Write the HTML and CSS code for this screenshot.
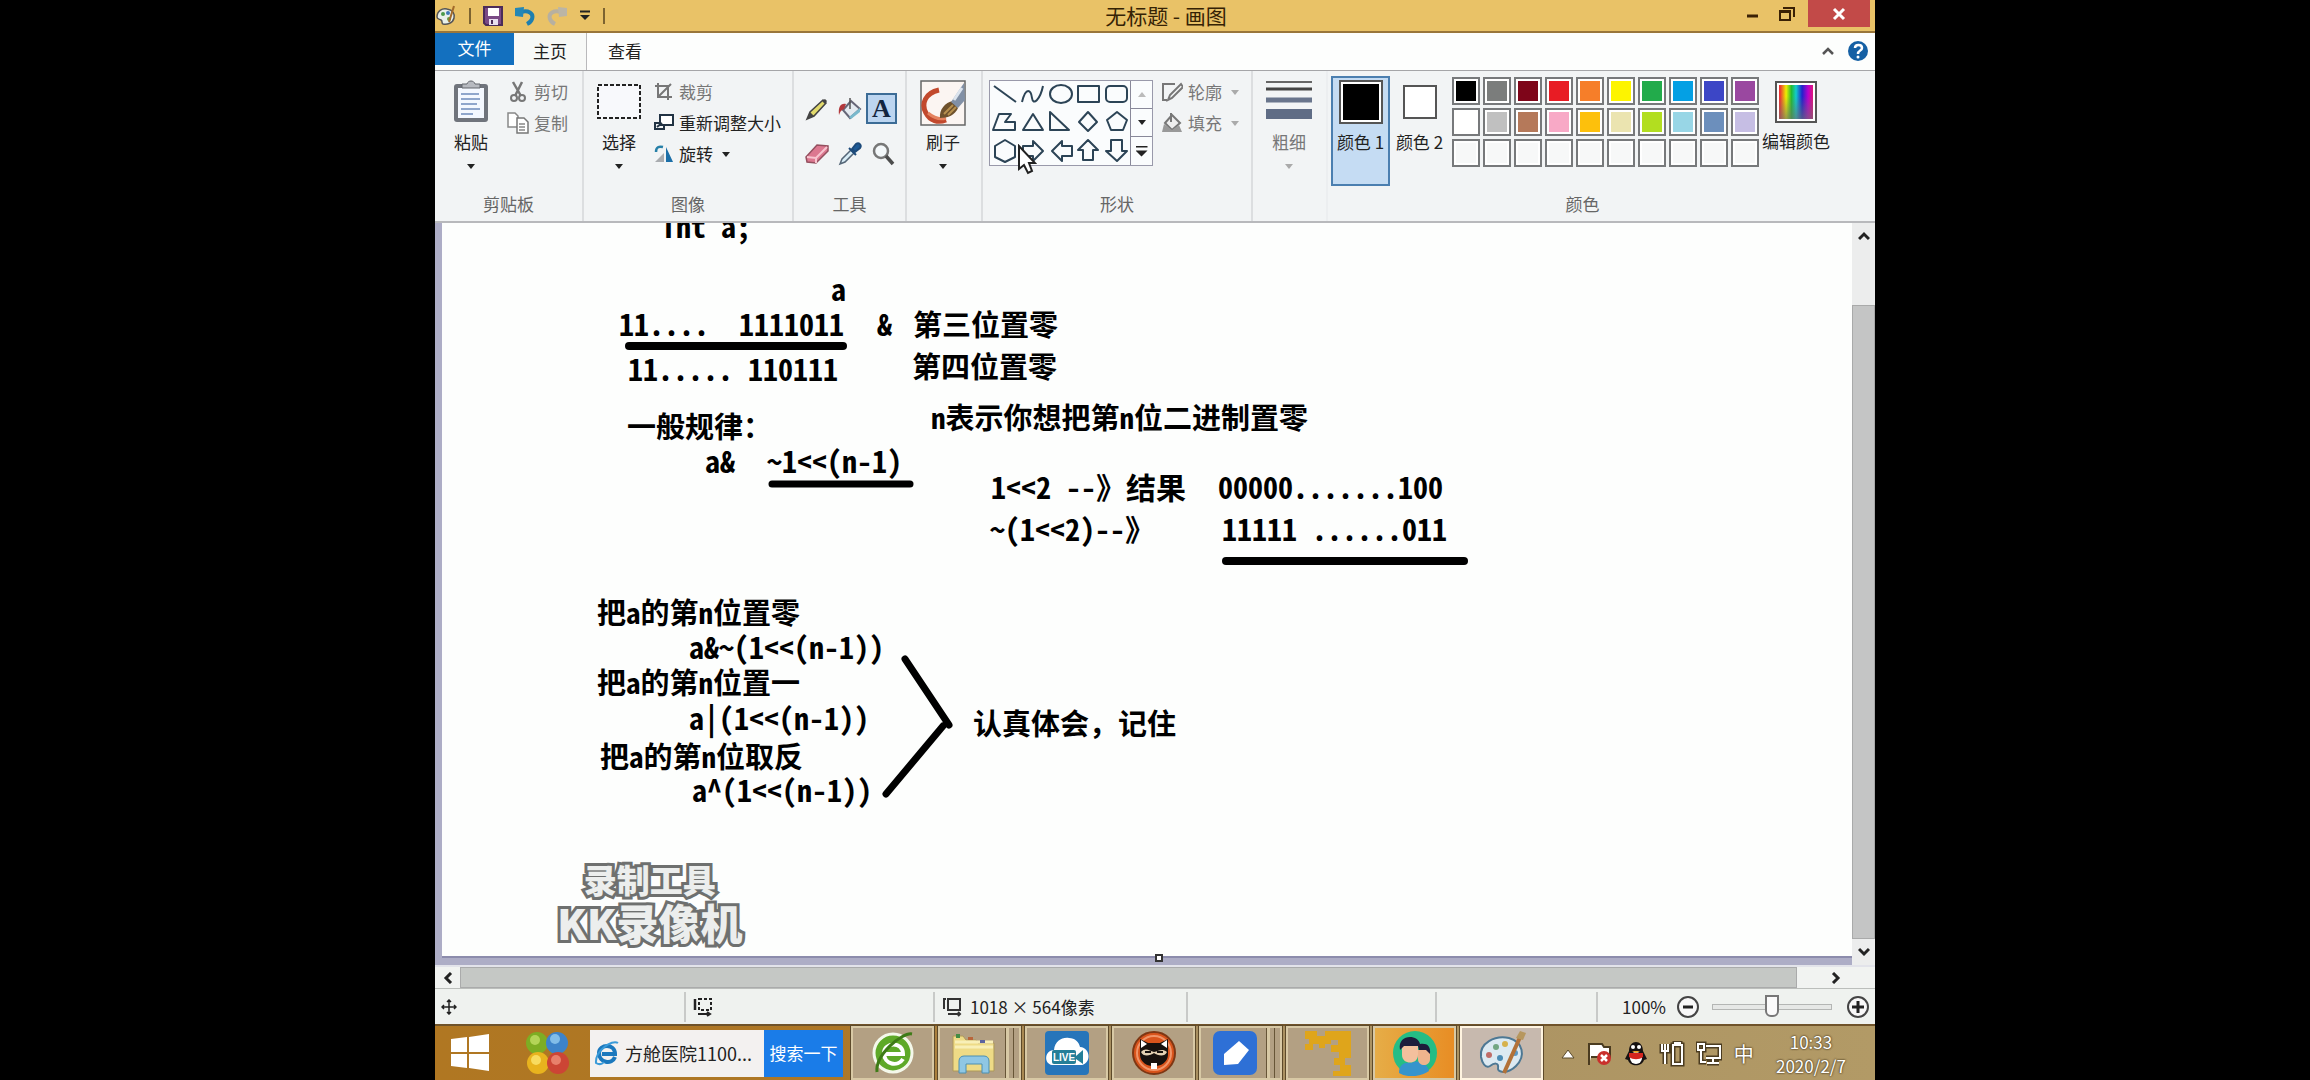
FILE: index.html
```html
<!DOCTYPE html>
<html lang="zh-CN">
<head>
<meta charset="utf-8">
<title>无标题 - 画图</title>
<link rel="stylesheet" href="styles.css">
</head>
<body>
<div class="screen">
  <header class="titlebar">
    <div class="quick">
      <svg class="q-logo" width="22" height="22" viewBox="0 0 22 22"><path d="M2 12C2 6 7 3 12 4c6 1 8 5 7 9-1 5-7 7-11 6-2-1 0-3-2-4s-4-1-4-3z" fill="#e8f0ea" stroke="#555" stroke-width="1.500"/><circle cx="8" cy="9" r="2" fill="#4a9a4a"/><circle cx="13" cy="8" r="2" fill="#3e79b8"/><circle cx="14" cy="14" r="2" fill="#6a9a40"/><path d="M19 1l-5 16" stroke="#a26a2a" stroke-width="2"/></svg>
      <span class="bar"></span>
      <button aria-label="保存"><svg width="20" height="20" viewBox="0 0 20 20"><path d="M1 1h18v18H3l-2-2z" fill="#7a4a86" stroke="#4b2c59" stroke-width="2"/><path d="M5 2h11v8H5z" fill="#fff"/><path d="M6 13h9v6H6z" fill="#e9dff0"/><path d="M8 14h2v4H8z" fill="#4b2c59"/></svg></button>
      <button aria-label="撤消"><svg width="20" height="20" viewBox="0 0 20 20"><path d="M6 6c7-2 13 1 11 7-1 3-3 4-5 5" fill="none" stroke="#1e7fb0" stroke-width="4"/><path d="M0 2l9-1-1 10-8-1z" fill="#2487b5"/></svg></button>
      <button aria-label="重做"><svg width="20" height="20" viewBox="0 0 20 20"><path d="M14 6C7 4 1 7 3 13c1 3 3 4 5 5" fill="none" stroke="#b7b0a0" stroke-width="4"/><path d="M20 2l-9-1 1 10 8-1z" fill="#bbb5a6"/></svg></button>
      <button aria-label="自定义"><svg width="12" height="12" viewBox="0 0 12 12"><path d="M1 1.500h10" stroke="#222" stroke-width="2"/><path d="M1 5h10l-5 5z" fill="#222"/></svg></button>
      <span class="bar"></span>
    </div>
    <h1>无标题 - 画图</h1>
    <div class="winbtns">
      <button aria-label="最小化"><svg width="14" height="14" viewBox="0 0 14 14"><path d="M1 9h11" stroke="#3a2105" stroke-width="3"/></svg></button>
      <button aria-label="还原"><svg width="16" height="16" viewBox="0 0 16 16"><path d="M1 5h10v9H1zM1 6h10M4 2h11v9" fill="none" stroke="#3a2105" stroke-width="2"/></svg></button>
      <button class="close" aria-label="关闭"><svg width="14" height="14" viewBox="0 0 14 14"><path d="M2 2l10 10M12 2L2 12" stroke="#fff" stroke-width="3"/></svg></button>
    </div>
  </header>

  <nav class="tabs">
    <button class="tab file">文件</button>
    <button class="tab home">主页</button>
    <button class="tab view">查看</button>
    <button class="icon fold" aria-label="折叠功能区"><svg width="14" height="12" viewBox="0 0 14 12"><path d="M2 9l5-5 5 5" fill="none" stroke="#555" stroke-width="2.500"/></svg></button>
    <button class="icon" aria-label="帮助"><svg width="20" height="20" viewBox="0 0 20 20"><circle cx="10" cy="10" r="10" fill="#1560a4"/><path d="M7 7c0-4 7-4 7 0 0 3-4 2-4 6" fill="none" stroke="#fff" stroke-width="2.500"/><circle cx="10" cy="16" r="1.500" fill="#fff"/></svg></button>
  </nav>

  <section class="ribbon">
    <div class="group g-clip">
      <div class="tools">
        <button class="big"><svg class="pic" width="36" height="44" viewBox="0 0 36 44"><rect x="1" y="4" width="34" height="38" rx="3" fill="#70747c"/><rect x="5" y="8" width="26" height="30" fill="#f4f8ff"/><path d="M8 14h18M8 19h19M8 24h16M8 29h19M8 34h12" stroke="#8fa6cc" stroke-width="2"/><path d="M9 8V4h5c1-4 7-4 8 0h5v4z" fill="#b7bac0" stroke="#63666c"/></svg><span>粘贴</span><i class="down"></i></button>
        <div class="rows">
          <button class="row dim"><svg width="22" height="22" viewBox="0 0 22 22"><path d="M6 1l8 14M15 1L8 15" stroke="#777" stroke-width="2.500"/><circle cx="7" cy="17" r="3" fill="none" stroke="#777" stroke-width="2"/><circle cx="15" cy="17" r="3" fill="none" stroke="#777" stroke-width="2"/></svg>剪切</button>
          <button class="row dim"><svg width="22" height="22" viewBox="0 0 22 22"><path d="M1 1h7l3 3v11H1z" fill="#fff" stroke="#888" stroke-width="1.500"/><path d="M10 6h7l4 4v11H10z" fill="#fff" stroke="#777" stroke-width="1.500"/><path d="M12 12h6M12 15h6M12 18h6" stroke="#888" stroke-width="1.500"/></svg>复制</button>
        </div>
      </div>
      <h2>剪贴板</h2>
    </div>
    <div class="group g-image">
      <div class="tools">
        <button class="big"><svg class="pic" width="44" height="44" viewBox="0 0 44 44"><rect x="1" y="5" width="42" height="33" fill="#f8f9fc" stroke="#222" stroke-width="2" stroke-dasharray="4 2"/></svg><span>选择</span><i class="down"></i></button>
        <div class="rows">
          <button class="row dim"><svg width="20" height="20" viewBox="0 0 20 20"><path d="M4 1v14h14M1 4h13v14M5 14L17 2" fill="none" stroke="#777" stroke-width="2"/></svg>裁剪</button>
          <button class="row"><svg width="20" height="20" viewBox="0 0 20 20"><path d="M6 2h13v10H6z" fill="#fff" stroke="#234" stroke-width="2"/><path d="M5 10H1v6h9v-3M3 14l5-4" fill="none" stroke="#234" stroke-width="2"/></svg>重新调整大小</button>
          <button class="row"><svg width="20" height="20" viewBox="0 0 20 20"><path d="M1 18h9v-9z" fill="#a9acb0"/><path d="M12 18h7L12 3z" fill="#1c6fa8"/><path d="M2 8C2 3 5 2 9 3" fill="none" stroke="#2780a8" stroke-width="2.500"/></svg>旋转<i class="down"></i></button>
        </div>
      </div>
      <h2>图像</h2>
    </div>
    <div class="group g-tools">
      <div class="toolgrid">
        <button aria-label="铅笔"><svg width="24" height="24" viewBox="0 0 24 24"><path d="M2 22l3-7L18 3l3 3L9 19z" fill="#e2da6c" stroke="#444" stroke-width="1.500"/><path d="M2 22l3-7 4 4zM17 4l3-2 2 2-2 3z" fill="#444"/></svg></button>
        <button aria-label="填充"><svg width="26" height="24" viewBox="0 0 26 24"><path d="M14 4l9 8-10 9-7-8z" fill="#e4eaf0" stroke="#667" stroke-width="2"/><path d="M13 1v11" stroke="#555" stroke-width="1.500"/><path d="M9 7C4 6 1 9 2 18c1-3 2-5 5-6z" fill="#b2383c"/><path d="M12 20l11-9v4l-9 7z" fill="#79b8cc"/></svg></button>
        <button class="on" aria-label="文本">A</button>
        <button aria-label="橡皮擦"><svg width="24" height="22" viewBox="0 0 24 22"><path d="M1 14L12 2l11 1v5L11 20l-9-1z" fill="#dc7890" stroke="#94505f" stroke-width="1.500"/><path d="M2 14l9 1L22 4M11 15v5" fill="none" stroke="#f8c5d0" stroke-width="2"/></svg></button>
        <button aria-label="取色器"><svg width="24" height="24" viewBox="0 0 24 24"><path d="M2 22l2-5 9-9 3 3-9 9z" fill="#d9edf7" stroke="#567" stroke-width="1.500"/><path d="M11 6l7 7M14 7l4-5c3-2 6 1 4 4l-5 4z" fill="#1d5a96" stroke="#1d4a7a" stroke-width="2"/></svg></button>
        <button aria-label="放大镜"><svg width="24" height="24" viewBox="0 0 24 24"><circle cx="10" cy="9" r="7" fill="#f4f8fa" stroke="#777" stroke-width="2.500"/><path d="M15 14l7 8" stroke="#4c4c4c" stroke-width="3.500"/></svg></button>
      </div>
      <h2>工具</h2>
    </div>
    <div class="group g-brush">
      <div class="tools">
        <button class="big"><svg class="pic" width="46" height="46" viewBox="0 0 46 46"><rect x="1" y="1" width="44" height="44" fill="#fbf5f2" stroke="#666" stroke-width="1.500"/><path d="M19 10C5 13 1 24 6 33c4 8 12 10 20 7" fill="none" stroke="#c2492d" stroke-width="5"/><path d="M8 33c6 5 12 7 18 5" fill="none" stroke="#e4825f" stroke-width="3"/><path d="M20 38c-1-8 5-16 13-17l5 7c-3 7-10 10-18 10z" fill="#6e512c"/><path d="M24 34l9-9M28 35l8-8" stroke="#b7904e" stroke-width="2"/><path d="M31 22L44 3l1 17-7 8z" fill="#8190a6"/><path d="M34 20l8-12" stroke="#dce4ee" stroke-width="3"/></svg><span>刷子</span><i class="down"></i></button>
      </div>
    </div>
    <div class="group g-shapes">
      <div class="tools">
        <div class="gallery">
          <svg width="140" height="84" viewBox="0 0 140 84" role="img" aria-label="形状库"><g fill="none" stroke="#2c4456" stroke-width="2" stroke-linejoin="round"><path d="M4 5l22 16"/><path d="M32 21c4-16 9-12 10-4s8 2 11-12"/><ellipse cx="71" cy="13" rx="11" ry="9"/><path d="M88 5h21v16H88z"/><rect x="116" y="5" width="21" height="16" rx="4"/><path d="M3 49l6-16h12l-6 8h10v8z"/><path d="M43 33l10 16H33z"/><path d="M60 31v18h19z"/><path d="M98 31l9 10-9 9-9-9z"/><path d="M127 31l10 8-4 10h-12l-4-10z"/><path d="M15 59l10 6v11l-10 5-10-5V65z"/><path d="M33 65h10v-5l10 10-10 10v-5H33z"/><path d="M82 65H72v-5L62 70l10 10v-5h10z"/><path d="M93 79V69h-5l10-10 10 10h-5v10z"/><path d="M121 59v11h-5l11 10 10-10h-5V59z"/></g></svg>
          <div class="pager"><button class="off" aria-label="上一行"><i class="up"></i></button><button aria-label="下一行"><i class="down"></i></button><button aria-label="更多"><i class="more"></i></button></div>
        </div>
        <div class="rows">
          <button class="row dim"><svg width="22" height="22" viewBox="0 0 22 22"><path d="M14 3H2v16h4M7 19l2-5L20 3l2 3L11 17z" fill="none" stroke="#777" stroke-width="2"/></svg>轮廓<i class="down"></i></button>
          <button class="row dim"><svg width="22" height="22" viewBox="0 0 22 22"><path d="M11 3l8 8-8 7-7-7zM10 1v9" fill="#eee" stroke="#777" stroke-width="2"/><path d="M3 12l-2 8h20l-3-7-7 5z" fill="#999"/></svg>填充<i class="down"></i></button>
        </div>
      </div>
      <h2>形状</h2>
    </div>
    <div class="group g-size">
      <div class="tools">
        <button class="big dim"><svg class="pic" width="46" height="44" viewBox="0 0 46 44"><path d="M0 2h46" stroke="#666" stroke-width="2"/><path d="M0 9h46" stroke="#444" stroke-width="3"/><path d="M0 20h46" stroke="#69758c" stroke-width="5"/><path d="M0 34h46" stroke="#5f6c85" stroke-width="10"/></svg><span>粗细</span><i class="down"></i></button>
      </div>
    </div>
    <div class="group g-colors">
      <div class="tools">
        <button class="pick on"><b class="sw black"></b><span>颜色 1</span></button>
        <button class="pick"><b class="sw white"></b><span>颜色 2</span></button>
        <div class="palette">
          <button class="k1" aria-label="黑色"></button><button class="k2" aria-label="灰色"></button><button class="k3" aria-label="深红"></button><button class="k4" aria-label="红色"></button><button class="k5" aria-label="橙色"></button><button class="k6" aria-label="黄色"></button><button class="k7" aria-label="绿色"></button><button class="k8" aria-label="青绿"></button><button class="k9" aria-label="靛青"></button><button class="k10" aria-label="紫色"></button>
          <button class="k11" aria-label="白色"></button><button class="k12" aria-label="浅灰"></button><button class="k13" aria-label="褐色"></button><button class="k14" aria-label="玫瑰"></button><button class="k15" aria-label="金色"></button><button class="k16" aria-label="浅黄"></button><button class="k17" aria-label="酸橙"></button><button class="k18" aria-label="淡青"></button><button class="k19" aria-label="蓝灰"></button><button class="k20" aria-label="淡紫"></button>
          <button aria-label="空 1"></button><button aria-label="空 2"></button><button aria-label="空 3"></button><button aria-label="空 4"></button><button aria-label="空 5"></button><button aria-label="空 6"></button><button aria-label="空 7"></button><button aria-label="空 8"></button><button aria-label="空 9"></button><button aria-label="空 10"></button>
        </div>
        <button class="big edit"><b class="rainbow"></b><span>编辑颜色</span></button>
      </div>
      <h2>颜色</h2>
    </div>
    <svg class="cursor" width="20" height="32" viewBox="0 0 20 32"><path d="M2 2v23l5-4 4 8 4-2-3-8h6z" fill="#fff" stroke="#222" stroke-width="2"/></svg>
  </section>

  <main class="work">
    <div class="canvas">
      <svg class="ink" width="1410" height="735" viewBox="442 221 1410 735"><g stroke="#000" stroke-width="8" stroke-linecap="round" fill="none"><path d="M629 344h214"/><path d="M772 482h138" stroke-width="7"/><path d="M1226 559h238"/><path d="M905 657l44 66M943 724l-57 68" stroke-width="7"/></g></svg>
      <p class="t n1">int a;</p>
      <p class="t n2">a</p>
      <p class="t n3">11....  1111011</p>
      <p class="t n4">&amp;</p>
      <p class="t zh n5">第三位置零</p>
      <p class="t n6">11..... 110111</p>
      <p class="t zh n7">第四位置零</p>
      <p class="t zh n8">一般规律：</p>
      <p class="t n9">a&amp;</p>
      <p class="t n10">~1&lt;&lt;(n-1)</p>
      <p class="t zh n11">n表示你想把第n位二进制置零</p>
      <p class="t n12">1&lt;&lt;2 --》结果</p>
      <p class="t n13">00000.......100</p>
      <p class="t n14">~(1&lt;&lt;2)--》</p>
      <p class="t n15">11111 ......011</p>
      <p class="t zh n16">把a的第n位置零</p>
      <p class="t n17">a&amp;~(1&lt;&lt;(n-1))</p>
      <p class="t zh n18">把a的第n位置一</p>
      <p class="t n19">a|(1&lt;&lt;(n-1))</p>
      <p class="t zh n20">把a的第n位取反</p>
      <p class="t n21">a^(1&lt;&lt;(n-1))</p>
      <p class="t zh n22">认真体会，记住</p>
      <div class="mark"><p>录制工具</p><p class="kk">KK录像机</p></div>
    </div>
    <div class="vscroll"><button aria-label="向上滚动"><svg width="12" height="10" viewBox="0 0 12 10"><path d="M1 8l5-5 5 5" fill="none" stroke="#222" stroke-width="3"/></svg></button><div class="thumb"></div><button aria-label="向下滚动"><svg width="12" height="10" viewBox="0 0 12 10"><path d="M1 2l5 5 5-5" fill="none" stroke="#222" stroke-width="3"/></svg></button></div>
    <i class="handle"></i>
  </main>
  <div class="hscroll"><button aria-label="向左滚动"><svg width="10" height="12" viewBox="0 0 10 12"><path d="M8 1L3 6l5 5" fill="none" stroke="#222" stroke-width="3"/></svg></button><div class="thumb"></div><button class="r" aria-label="向右滚动"><svg width="10" height="12" viewBox="0 0 10 12"><path d="M2 1l5 5-5 5" fill="none" stroke="#222" stroke-width="3"/></svg></button></div>

  <footer class="status">
    <div class="s1"><svg width="16" height="16" viewBox="0 0 16 16"><path d="M8 1v14M1 8h14M6 3l2-2 2 2M6 13l2 2 2-2M3 6L1 8l2 2M13 6l2 2-2 2" fill="none" stroke="#222" stroke-width="1.500"/></svg></div>
    <div class="s2"><svg width="20" height="20" viewBox="0 0 20 20"><path d="M2 2v11" stroke="#222" stroke-width="2.500"/><path d="M6 2h12v11H6z" fill="none" stroke="#222" stroke-width="2" stroke-dasharray="3 2"/><path d="M5 17h12m-3-2l3 2-3 2" fill="none" stroke="#222" stroke-width="2"/></svg></div>
    <div class="s3"><svg width="20" height="20" viewBox="0 0 20 20"><path d="M1 2h3M2 2v10M6 2h12v11H6zM6 17h12m-2-2l2 2-2 2" fill="none" stroke="#333" stroke-width="2"/></svg><span>1018 × 564像素</span></div>
    <div class="s4"></div>
    <div class="s5"></div>
    <div class="zoom"><label for="zoom">100%</label>
      <button aria-label="缩小"><svg width="24" height="24" viewBox="0 0 24 24"><circle cx="12" cy="12" r="10" fill="#f8f8f8" stroke="#444" stroke-width="2"/><path d="M7 12h10" stroke="#222" stroke-width="3"/></svg></button>
      <input id="zoom" type="range" min="0" max="100" value="50">
      <button aria-label="放大"><svg width="24" height="24" viewBox="0 0 24 24"><circle cx="12" cy="12" r="10" fill="#f8f8f8" stroke="#444" stroke-width="2"/><path d="M6 12h12M12 6v12" stroke="#222" stroke-width="3"/></svg></button>
    </div>
  </footer>

  <nav class="taskbar">
    <button class="start" aria-label="开始"><svg width="40" height="38" viewBox="0 0 40 38"><path d="M1 5l16-2v15H1zM19 3l20-3v18H19zM1 20h16v14L1 32zM19 20h20v17l-20-3z" fill="#fff"/></svg></button>
    <button class="clover" aria-label="启动器"><svg width="44" height="44" viewBox="0 0 44 44"><circle cx="12" cy="12" r="11" fill="#7dad23"/><circle cx="32" cy="12" r="11" fill="#3d83c9"/><circle cx="13" cy="32" r="11" fill="#e8b31e"/><circle cx="33" cy="32" r="11" fill="#cc4535"/><circle cx="10" cy="9" r="5" fill="#b3d457"/><circle cx="30" cy="8" r="5" fill="#82bde8"/><circle cx="11" cy="29" r="5" fill="#f8dc60"/><circle cx="31" cy="29" r="5" fill="#e8806b"/></svg></button>
    <div class="search"><svg width="26" height="26" viewBox="0 0 26 26"><path d="M21 17c-3 8-16 6-16-4 0-9 16-10 16 1H8" fill="none" stroke="#1b78bd" stroke-width="4"/><path d="M24 3C18-1 1 11 2 23c5 3 8-1 8-1" fill="none" stroke="#3a9bd9" stroke-width="2"/></svg><input type="text" aria-label="搜索" value="方舱医院1100..."><button>搜索一下</button></div>
    <div class="apps">
      <button class="app a1" aria-label="浏览器"><svg width="44" height="44" viewBox="0 0 44 44"><circle cx="22" cy="22" r="19" fill="#5ea928" stroke="#f4f8ea" stroke-width="3"/><path d="M32 28c-5 8-19 6-19-6 0-11 19-12 19 1H14" fill="none" stroke="#fff" stroke-width="4"/><path d="M41 3C31 1 4 24 6 41" fill="none" stroke="#3e7b17" stroke-width="3"/></svg></button>
      <button class="app a2 stack" aria-label="文件资源管理器"><svg width="46" height="42" viewBox="0 0 46 42"><path d="M2 4h10l3 4h10l2 3h16v28H2z" fill="#eedb86" stroke="#ad985a"/><path d="M4 10h38M4 15h38" stroke="#f8efb7" stroke-width="3"/><path d="M5 2h4v4H5z" fill="#438c44"/><path d="M17 5h5v3h-5z" fill="#b9653a"/><path d="M29 8h5v3h-5z" fill="#5b63a0"/><path d="M8 41V29c0-3 2-5 5-5h20c3 0 5 2 5 5v12h-7v-9H15v9z" fill="#8fc7e4" stroke="#4d8fb0"/></svg></button>
      <button class="app a3" aria-label="LIVE"><svg width="46" height="46" viewBox="0 0 46 46"><rect x="1" y="1" width="44" height="44" rx="4" fill="#2675ba"/><path d="M8 35c-9-2-7-15 2-15 1-9 8-13 15-12 6 0 10 4 11 9 11 1 11 16 2 18z" fill="#fff"/><rect x="8" y="20" width="24" height="14" rx="2" fill="#247f98"/><path d="M32 26l7-6v14l-7-5z" fill="#247f98"/><text x="20" y="31" text-anchor="middle" class="live">LIVE</text></svg></button>
      <button class="app a4" aria-label="游戏"><svg width="46" height="46" viewBox="0 0 46 46"><circle cx="23" cy="23" r="21" fill="#d9541c" stroke="#7e3714" stroke-width="2"/><circle cx="23" cy="23" r="17" fill="none" stroke="#f09468" stroke-width="2"/><path d="M9 9l8 4h12l8-4v16c-1 15-27 15-28 0z" fill="#17110e"/><path d="M10 10l6 4-6 4zM36 10l-6 4 6 4z" fill="#fff"/><path d="M10 22c5-5 8-1 13 0 5-1 8-4 13 0-2 5-9 4-13 1-4 3-11 4-13-1z" fill="#e4d1b3"/><path d="M14 22h6M26 22h6" stroke="#17110e" stroke-width="2"/><path d="M20 33h6v6h-6z" fill="#fff"/></svg></button>
      <button class="app a5 stack" aria-label="笔记"><svg width="46" height="46" viewBox="0 0 46 46"><rect x="1" y="1" width="44" height="44" rx="7" fill="#2e70d6"/><path d="M12 24l15-13 10 9-11 14-14 1z" fill="#fff"/></svg></button>
      <button class="app a6" aria-label="应用"><svg width="50" height="46" viewBox="0 0 50 46"><path d="M2 1h12v5h8V1h26v27h-6v7h6v11H30v-5h7v-6h-6v-7h5v-6h-8v-7h7v-5h-7v4h-6v4h-6v-4h-6v6H2v-6h4V9H2z" fill="#dfa51b"/></svg></button>
      <button class="app a7" aria-label="课堂"><svg width="46" height="46" viewBox="0 0 46 46"><circle cx="23" cy="23" r="22" fill="#25bd85"/><path d="M7 43c0-9 6-11 12-10 8-4 16 0 18 8-8 6-22 7-30 2z" fill="#3694cc"/><path d="M10 15h16v10c0 10-16 10-16 0z" fill="#f4c09d"/><path d="M26 20h12v9c0 8-12 8-12 0z" fill="#efb48d"/><path d="M8 20C5 4 26 4 28 14c7-1 11 2 10 10l-4-4h-7l-1-4H12z" fill="#1d1d3c"/></svg></button>
      <button class="app a8" aria-label="画图"><svg width="48" height="46" viewBox="0 0 48 46"><path d="M3 27C1 13 17 5 31 8c14 4 17 18 7 28-8 8-19 7-18 2 1-6-4-5-8-2-5 3-8-4-9-9z" fill="#dceaf2" stroke="#4d7894" stroke-width="2"/><circle cx="11" cy="25" r="3" fill="#c06d68"/><circle cx="18" cy="17" r="3" fill="#73a782"/><circle cx="27" cy="14" r="3" fill="#d6b24d"/><circle cx="22" cy="28" r="3" fill="#4b8cb5"/><circle cx="37" cy="23" r="3" fill="#5b98c3"/><path d="M43 5L26 43" stroke="#b27239" stroke-width="4"/><path d="M38 8l4-7 6 2-3 7z" fill="#b7975e"/></svg></button>
    </div>
    <div class="tray">
      <svg width="14" height="10" viewBox="0 0 14 10"><path d="M7 1l6 8H1z" fill="#fff" stroke="#5b4a2b"/></svg>
      <svg width="26" height="26" viewBox="0 0 26 26"><path d="M3 24V3h13l2 3h6v10H5" fill="#fff" stroke="#4a3b20" stroke-width="2"/><circle cx="18" cy="17" r="7" fill="#c9302c"/><path d="M15 14l6 6M21 14l-6 6" stroke="#fff" stroke-width="2.500"/></svg>
      <svg width="24" height="26" viewBox="0 0 24 26"><path d="M5 10C5-2 19-2 19 10l4 8-3 1c-2 7-14 7-16 0l-3-1z" fill="#161212"/><ellipse cx="12" cy="17" rx="6" ry="6" fill="#fff"/><path d="M5 12h14v4c-4 3-10 3-14 0z" fill="#d3251e"/><circle cx="9" cy="6" r="2" fill="#fff"/><circle cx="15" cy="6" r="2" fill="#fff"/><path d="M8 10h8l-4 2z" fill="#eaa21d"/></svg>
      <svg width="26" height="26" viewBox="0 0 26 26"><path d="M3 3v7h6V3M6 3v20M14 4h9v19h-9zM16 4V2h5v2" fill="none" stroke="#4a3b20" stroke-width="5"/><path d="M3 3v7h6V3M6 3v20M14 4h9v19h-9zM16 4V2h5v2" fill="none" stroke="#fff" stroke-width="2"/></svg>
      <svg width="26" height="26" viewBox="0 0 26 26"><path d="M10 5h14v12H10M17 17v5M11 22h12M2 3h6v6H2zM5 9v12h5" fill="none" stroke="#4a3b20" stroke-width="5"/><path d="M10 5h14v12H10M17 17v5M11 22h12M2 3h6v6H2zM5 9v12h5" fill="none" stroke="#fff" stroke-width="2"/></svg>
      <span class="ime">中</span>
      <div class="clock"><span>10:33</span><span>2020/2/7</span></div>
    </div>
  </nav>
</div>
</body>
</html>
```
FILE: styles.css
```css
* { box-sizing: border-box; margin: 0; padding: 0; }
body { background: #000; font: 17px/24px "Noto Sans CJK SC", sans-serif; color: #222; }
button, input { font: inherit; color: inherit; border: 0; background: none; }
svg { display: block; flex: none; }
.screen { height: 100vh; aspect-ratio: 4 / 3; margin: 0 auto; display: flex; flex-direction: column; background: #f2f3f5; overflow: hidden; }

/* title bar */
.titlebar { height: 33px; flex: none; display: grid; grid-template-columns: 1fr auto 1fr; background: #e9c267; border-bottom: 2px solid #99763a; }
.quick { display: flex; align-items: center; gap: 12px; }
.quick .bar { width: 2px; height: 16px; background: #7c6330; }
.quick button { display: flex; }
.titlebar h1 { font-size: 21px; line-height: 31px; font-weight: 400; color: #352205; padding-left: 22px; }
.winbtns { display: flex; justify-content: flex-end; align-items: flex-start; gap: 8px; padding-right: 5px; }
.winbtns button { width: 26px; height: 27px; display: flex; align-items: center; justify-content: center; }
.winbtns .close { width: 62px; background: #c24a48; }

/* tabs */
.tabs { height: 38px; flex: none; display: flex; background: #fdfefd; border-bottom: 1px solid #a5a5a8; }
.tab { height: 37px; padding-bottom: 2px; }
.file { width: 79px; height: 32px; background: #1370bf; color: #fff; }
.home { width: 73px; background: #f7f9f7; border-right: 1px solid #b9b9bb; }
.view { width: 76px; }
.tabs .icon { width: 26px; height: 36px; display: flex; align-items: center; justify-content: center; margin-right: 4px; }
.tabs .fold { margin-left: auto; }

/* ribbon */
.ribbon { height: 152px; flex: none; display: flex; position: relative; background: #f2f4f5; border-bottom: 2px solid #b8b9bc; }
.group { display: flex; flex-direction: column; justify-content: space-between; border-right: 2px solid #dcdee0; }
.group h2 { font-size: 17px; line-height: 24px; font-weight: 400; color: #666; text-align: center; height: 29px; }
.tools { display: flex; padding-top: 9px; }
.big { display: flex; flex-direction: column; align-items: center; height: 100px; }
.big span { height: 24px; margin-top: 2px; }
.big .pic, .rainbow { margin-bottom: 4px; }
.g-brush .pic { margin-bottom: 2px; }
.down { width: 0; height: 0; border: 4px solid transparent; border-top: 5px solid #222; border-bottom: 0; }
.up { width: 0; height: 0; border: 4px solid transparent; border-bottom: 5px solid #bbb; border-top: 0; }
.big .down { margin-top: 10px; }
.rows { display: flex; flex-direction: column; gap: 7px; }
.row { display: flex; align-items: center; gap: 5px; height: 24px; white-space: nowrap; }
.row .down { margin-left: 4px; }
.dim { color: #777; }
.dim .down { border-top-color: #aaa; }
.g-clip { width: 149px; }
.g-clip .tools { padding-left: 18px; gap: 18px; }
.g-image { width: 210px; }
.g-image .tools { padding-left: 13px; gap: 13px; }
.g-tools { width: 113px; }
.toolgrid { display: grid; grid-template-columns: repeat(3, 33px); grid-auto-rows: 45px; padding: 15px 5px 0 6px; }
.toolgrid button { display: flex; justify-content: center; align-items: center; }
.toolgrid .on { width: 31px; height: 31px; align-self: center; border: 2px solid #3c6c96; background: #bcd5f0; font: bold 26px/27px "Liberation Serif", serif; color: #13253f; }
.g-brush { width: 76px; }
.g-brush .tools { padding-left: 13px; }
.g-shapes { width: 270px; }
.g-shapes .tools { padding-left: 6px; gap: 8px; }
.gallery { display: flex; height: 86px; border: 1px solid #99a; background: #fafcfd; }
.pager { width: 22px; display: grid; grid-template-rows: 1fr 1fr 1fr; border-left: 1px solid #889; }
.pager button { display: flex; align-items: center; justify-content: center; border-bottom: 1px solid #889; }
.pager button:last-child { border-bottom: 0; }
.more { width: 12px; height: 11px; background: linear-gradient(#222, #222) 0 0 / 12px 2px no-repeat; border: 0; clip-path: polygon(0 0, 100% 0, 100% 2px, 0 2px); position: relative; }
.pager .more { clip-path: polygon(0 0, 100% 0, 100% 2px, 0 2px, 0 5px, 100% 5px, 50% 100%, 0 5px); background: #222; }
.g-size { width: 75px; border-right-color: #eceef0; }
.g-size .tools { padding-left: 13px; }
.g-colors { flex: 1; border: 0; }
.g-colors .tools { padding: 5px 0 0 3px; }
.g-colors h2 { padding-right: 38px; }
.pick { width: 59px; height: 110px; display: flex; flex-direction: column; align-items: center; padding-top: 2px; border: 2px solid transparent; white-space: nowrap; }
.pick.on { border-color: #4b7fb0; background: #c5dcf3; }
.sw { width: 44px; height: 44px; margin-bottom: 6px; border: 2px solid #555; background: #000; box-shadow: inset 0 0 0 2px #fff; flex: none; }
.sw.white { width: 34px; height: 34px; margin: 5px 0 11px; background: #fff; }
.palette { display: grid; grid-template-columns: repeat(10, 28px); grid-auto-rows: 28px; gap: 3px; padding: 1px 0 0 3px; }
.palette button { border: 2px solid #77797b; background: #f7f8f8; box-shadow: inset 0 0 0 2px #fff; }
.palette .k1 { background: #000; } .palette .k2 { background: #7b7d7c; } .palette .k3 { background: #7e0519; } .palette .k4 { background: #e81c24; } .palette .k5 { background: #f67e29; }
.palette .k6 { background: #fdf400; } .palette .k7 { background: #22ab4b; } .palette .k8 { background: #04a0e4; } .palette .k9 { background: #3c46c6; } .palette .k10 { background: #9a48a0; }
.palette .k11 { background: #fff; } .palette .k12 { background: #c0c0c0; } .palette .k13 { background: #b5795a; } .palette .k14 { background: #f8a9c6; } .palette .k15 { background: #fdc00c; }
.palette .k16 { background: #ebe4b0; } .palette .k17 { background: #b2de20; } .palette .k18 { background: #98d6e6; } .palette .k19 { background: #6c8fbc; } .palette .k20 { background: #c6bee4; }
.edit { padding-top: 5px; margin-left: 3px; }
.rainbow { width: 42px; height: 42px; border: 2px solid #555; box-shadow: inset 0 0 0 2px #fff; background: linear-gradient(transparent 35%, rgba(110, 110, 110, .7)), linear-gradient(90deg, #e33 8%, #ee0 24%, #2b3 38%, #1cc 50%, #22c 66%, #b0c 82%, #e25); }
.cursor { position: absolute; left: 582px; top: 73px; }

/* drawing area */
.work { flex: 1; min-height: 0; display: flex; position: relative; padding-left: 7px; background: #adadc6; }
.canvas { flex: 1; position: relative; overflow: hidden; background: #fdfefd; margin-bottom: 9px; box-shadow: 0 2px 0 #8c8cac; }
.ink { position: absolute; left: 0; top: 0; }
.t { position: absolute; white-space: pre; font: 700 30px/32px "Noto Sans Mono CJK SC", "Noto Sans CJK SC", "Liberation Mono", monospace; color: #000; }
.zh { font-size: 29px; }
.n1 { left: 219px; top: -14px; }
.n2 { left: 389px; top: 49px; }
.n3 { left: 177px; top: 84px; }
.n4 { left: 435px; top: 84px; }
.n5 { left: 471px; top: 84px; }
.n6 { left: 186px; top: 129px; }
.n7 { left: 470px; top: 126px; }
.n8 { left: 185px; top: 186px; }
.n9 { left: 263px; top: 221px; }
.n10 { left: 325px; top: 221px; }
.n11 { left: 489px; top: 177px; }
.n12 { left: 549px; top: 247px; }
.n13 { left: 776px; top: 247px; }
.n14 { left: 548px; top: 289px; }
.n15 { left: 780px; top: 289px; }
.n16 { left: 155px; top: 372px; }
.n17 { left: 247px; top: 407px; }
.n18 { left: 155px; top: 442px; }
.n19 { left: 247px; top: 478px; }
.n20 { left: 158px; top: 516px; }
.n21 { left: 250px; top: 550px; }
.n22 { left: 531px; top: 483px; }
.mark { position: absolute; left: 115px; top: 636px; display: flex; flex-direction: column; align-items: center; font: 900 33px/40px "Noto Sans CJK SC", sans-serif; color: #eceeed; -webkit-text-stroke: 6px #6e706f; paint-order: stroke fill; }
.mark .kk { font-size: 42px; line-height: 46px; }
.vscroll { width: 23px; display: flex; flex-direction: column; background: #eceded; }
.vscroll button { height: 26px; display: flex; align-items: center; justify-content: center; }
.vscroll .thumb { flex: 1; margin: 56px 0 0; background: #c4c5c5; border: 1px solid #a9aaaa; }
.handle { position: absolute; left: 50%; bottom: 3px; width: 8px; height: 8px; background: #fff; border: 2px solid #333; }
.hscroll { height: 23px; flex: none; display: flex; background: #f1f3f1; border-top: 2px solid #e2e3ea; }
.hscroll button { width: 25px; display: flex; align-items: center; justify-content: center; }
.hscroll .r { width: 78px; }
.hscroll .thumb { flex: 1; background: #c5c8c5; border: 1px solid #aaabab; }

/* status bar */
.status { height: 36px; flex: none; display: flex; background: #eff2ef; border-top: 1px solid #bbbebb; }
.status > div { display: flex; align-items: center; border-right: 2px solid #c8cac8; margin: 3px 0 2px; }
.status .s1 { width: 251px; padding-left: 6px; }
.status .s2 { width: 249px; padding-left: 7px; }
.s3 { width: 253px; padding-left: 7px; gap: 8px; }
.s4 { width: 249px; }
.s5 { width: 161px; }
.status .zoom { flex: 1; border: 0; justify-content: flex-end; gap: 10px; padding-right: 5px; }
.zoom button { display: flex; }
.zoom input { width: 120px; height: 26px; appearance: none; background: none; margin: 0 4px 0 2px; }
.zoom input::-webkit-slider-runnable-track { height: 6px; border: 1px solid #b4b6b4; background: #e6e8e6; }
.zoom input::-webkit-slider-thumb { appearance: none; width: 14px; height: 22px; margin-top: -10px; border: 2px solid #777; background: #fafafa; border-radius: 0 0 6px 6px; }

/* task bar */
.taskbar { height: 56px; flex: none; display: flex; align-items: center; border-top: 2px solid #6f532a; background: linear-gradient(90deg, #b07722 0%, #ad7726 28%, #a78e60 45%, #b29a66 100%); }
.start { margin-left: 15px; }
.clover { margin-left: 35px; }
.search { margin-left: 21px; width: 253px; height: 47px; display: flex; align-items: center; background: #f3f1f0; padding-left: 4px; gap: 5px; }
.search input { flex: 1; min-width: 0; height: 40px; font-size: 18px; }
.search button { width: 79px; height: 47px; background: #1a7ce8; color: #fff; }
.apps { display: flex; height: 54px; gap: 4px; padding-left: 8px; }
.app { width: 83px; height: 54px; display: flex; align-items: center; justify-content: center; border: 2px solid #d8c9a5; outline: 1px solid #5d4a2a; background: #b3a083; }
.stack { padding-right: 12px; background: linear-gradient(90deg, #b3a083 82%, #675537 82% 84%, #d8c9a5 84% 87%, #b3a083 87% 92%, #675537 92% 94%, #b3a083 94%); }
.a7 { background: linear-gradient(90deg, #e6ad47, #e88d24); }
.a8 { background: #c7b9ae; border-color: #fff4e0; }
.live { font: bold 10px "Liberation Sans", sans-serif; fill: #fff; }
.tray { flex: 1; display: flex; align-items: center; justify-content: space-between; padding: 2px 18px 0 18px; color: #fff; text-shadow: 0 0 2px #4a3b20, 0 0 2px #4a3b20; }
.ime { font-size: 20px; }
.clock { display: flex; flex-direction: column; align-items: center; width: 92px; font-size: 17px; }
```
